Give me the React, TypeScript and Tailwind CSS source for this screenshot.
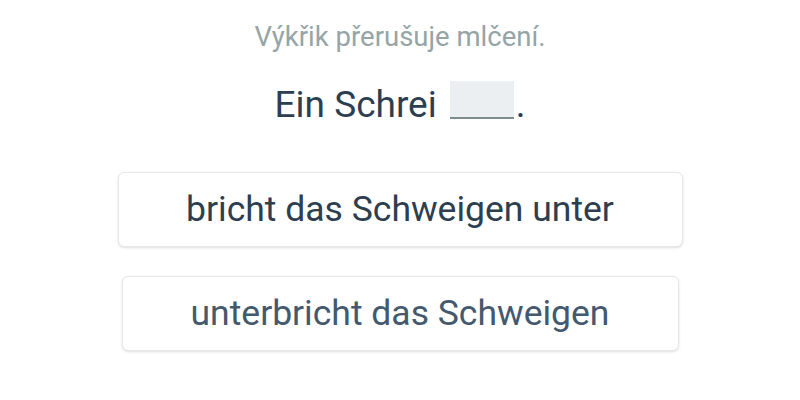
export default function App() {
  return (
    <div className="flex h-[400px] w-[800px] flex-col items-center bg-white font-['Roboto',sans-serif]">
      <p className="mt-[19px] text-[27.5px] leading-[36px] text-[#95a5a6]">Výkřik přerušuje mlčení.</p>

      <div className="mt-[26px] flex items-end text-[37px] leading-[44px] text-[#2c3e50]">
        <span>Ein Schrei</span>
        <span className="mb-[8px] ml-[13px] inline-block h-[38px] w-[64px] border-b-2 border-[#7f8c8d] bg-[#eceff1]" />
        <span className="ml-[2px]">.</span>
      </div>

      <div className="mt-[45px] flex flex-col items-center gap-[29px]">
        <button className="flex h-[75px] w-[565px] items-center justify-center rounded-md border border-[#e5e7eb] bg-white text-[35.5px] text-[#2c3e50] shadow-sm">
          bricht das Schweigen unter
        </button>
        <button className="flex h-[75px] w-[557px] items-center justify-center rounded-md border border-[#e5e7eb] bg-white text-[35.5px] text-[#44596e] shadow-sm">
          unterbricht das Schweigen
        </button>
      </div>
    </div>
  );
}
